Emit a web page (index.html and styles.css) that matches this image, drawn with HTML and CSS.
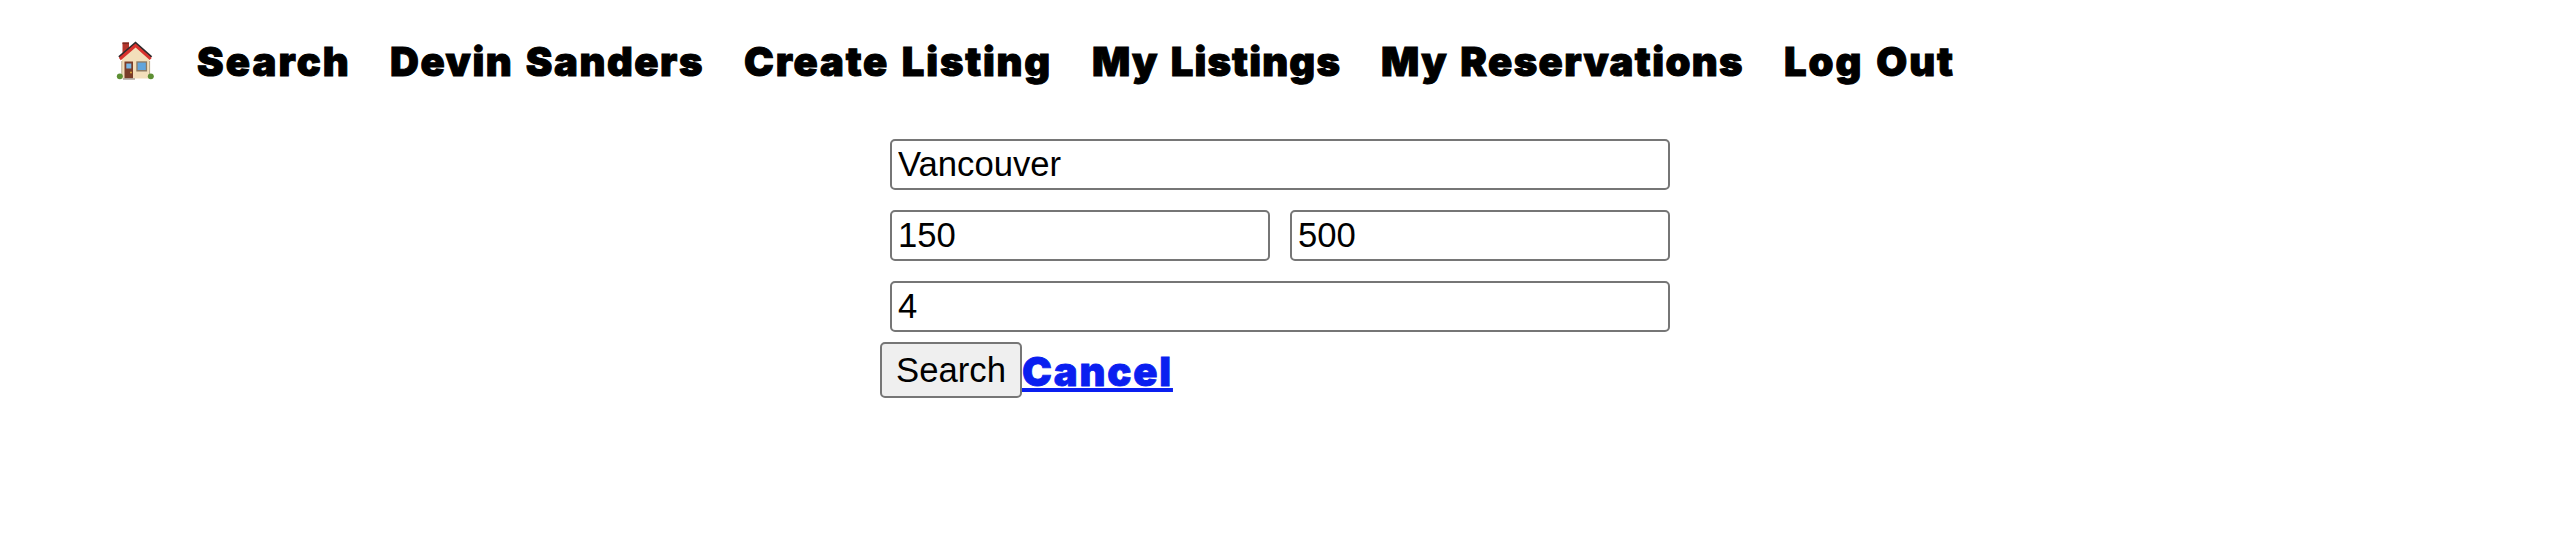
FILE: index.html
```html
<!DOCTYPE html>
<html lang="en">
<head>
<meta charset="utf-8">
<title>Search</title>
<link rel="stylesheet" href="styles.css">
</head>
<body>
<nav class="nav">
  <a class="home" aria-label="Home">
    <svg class="house" viewBox="0 0 40 40" width="40" height="40">
      <rect x="7.500" y="1.500" width="6.500" height="12" fill="#b5362c"/>
      <rect x="7.500" y="1.500" width="6.500" height="1.600" fill="#7d2a22"/>
      <path d="M7 17 20.500 4 34.500 17V37.500H7z" fill="#f3dfbb"/>
      <path d="M6.800 20v15M34.600 20v15" stroke="#b9a88a" stroke-width="1"/>
      <path d="M4 16 20.500 2 36.500 16" fill="none" stroke="#2f2a2c" stroke-width="2.200"/>
      <path d="M4.800 18 20.500 4.500 35.700 18" fill="none" stroke="#d9322d" stroke-width="3"/>
      <rect x="9.500" y="20.500" width="8.500" height="17" fill="#7a3d28"/>
      <rect x="11.300" y="22.500" width="5" height="5" fill="#79b7e6"/>
      <circle cx="16" cy="31.500" r="1" fill="#e0a63c"/>
      <rect x="21.300" y="20.300" width="10.800" height="10.200" fill="#8d7a62"/>
      <rect x="22.600" y="21.600" width="8.200" height="7.400" fill="#62a5dc"/>
      <rect x="8" y="37.200" width="12" height="1.500" fill="#aaa39b"/>
      <ellipse cx="4.800" cy="35.300" rx="3" ry="2.900" fill="#5d8f33"/>
      <ellipse cx="35.800" cy="35.300" rx="3" ry="2.900" fill="#5d8f33"/>
    </svg>
  </a>
  <a class="link search">Search</a>
  <a class="link user">Devin Sanders</a>
  <a class="link create">Create Listing</a>
  <a class="link listings">My Listings</a>
  <a class="link reservations">My Reservations</a>
  <a class="link logout">Log Out</a>
</nav>
<form class="form">
  <div class="row"><input class="field" type="text" value="Vancouver"></div>
  <div class="row"><input class="field" type="text" value="150"><input class="field" type="text" value="500"></div>
  <div class="row"><input class="field" type="text" value="4"></div>
  <div class="actions"><button class="submit" type="button">Search</button><a class="cancel" href="#">Cancel</a></div>
</form>
</body>
</html>
```
FILE: styles.css
```css
* { box-sizing: border-box; }
body {
  margin: 0;
  background: #fff;
  color: #000;
  font-family: Inter, "Arial Black", sans-serif;
  font-size: 40px;
  font-weight: 900;
  line-height: 56px;
}
.nav {
  display: flex;
  gap: 40px;
  padding: 34px 0 0 115px;
  height: 119px;
}
.home { width: 42px; height: 56px; padding-top: 7px; }
.house { display: block; }
.link { white-space: nowrap; word-spacing: 3px; -webkit-text-stroke: 1px #000; }
.search { width: 153px; letter-spacing: 2.1px; }
.user { width: 314px; letter-spacing: 1.54px; }
.create { width: 308px; letter-spacing: 1.79px; }
.listings { width: 249px; letter-spacing: 1.15px; }
.reservations { width: 363px; letter-spacing: 1.37px; }
.logout { width: 171px; letter-spacing: 1.93px; }
.form {
  width: 800px;
  margin: 0 auto;
  padding-top: 10px;
}
.row {
  display: flex;
  gap: 20px;
  padding: 10px;
}
.field {
  flex: 1;
  min-width: 0;
  height: 51px;
  margin: 0;
  padding: 3px 6px;
  border: 2px solid #767676;
  border-radius: 5px;
  background: #fff;
  color: #000;
  font: 34.67px "Liberation Sans", Arial, sans-serif;
}
.actions { display: flex; align-items: flex-start; }
.submit {
  width: 142px;
  height: 56px;
  margin: 0;
  padding: 0;
  border: 2px solid #767676;
  border-radius: 5px;
  background: #efefef;
  color: #000;
  font: 34.67px "Liberation Sans", Arial, sans-serif;
}
.cancel {
  width: 151px;
  padding-top: 2px;
  color: #0a1ff0;
  -webkit-text-stroke: 0.8px #0a1ff0;
  letter-spacing: 1.83px;
  white-space: nowrap;
  text-decoration: underline;
  text-decoration-thickness: 4px;
  text-underline-offset: 2px;
  text-decoration-skip-ink: none;
}
```
